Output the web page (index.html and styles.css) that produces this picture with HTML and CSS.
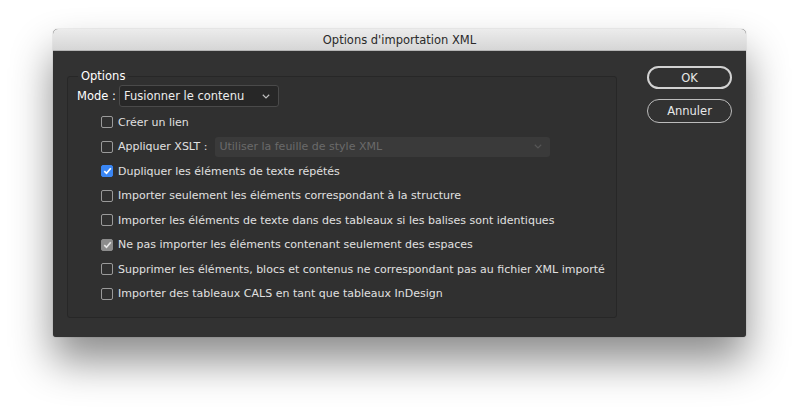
FILE: index.html
```html
<!DOCTYPE html>
<html lang="fr">
<head>
<meta charset="utf-8">
<title>Options d'importation XML</title>
<link rel="stylesheet" href="styles.css">
</head>
<body>
<div class="stage">
  <div class="window">
    <div class="titlebar">Options d'importation XML</div>
    <div class="content">
      <fieldset class="group">
        <legend class="legend">Options</legend>
        <div class="mode-row">
          <span class="mode-label">Mode :</span>
          <div class="select">
            <span>Fusionner le contenu</span>
            <svg class="chev" width="8" height="5" viewBox="0 0 8 5"><path d="M0.8 0.8 L4 3.9 L7.2 0.8" fill="none" stroke="#bdbdbd" stroke-width="1.2"/></svg>
          </div>
        </div>
        <ul class="checks">
          <li class="row"><span class="cb"></span><span>Créer un lien</span></li>
          <li class="row"><span class="cb"></span><span>Appliquer XSLT :</span>
            <div class="select select-disabled">
              <span>Utiliser la feuille de style XML</span>
              <svg class="chev" width="8" height="5" viewBox="0 0 8 5"><path d="M0.8 0.8 L4 3.9 L7.2 0.8" fill="none" stroke="#555" stroke-width="1.2"/></svg>
            </div>
          </li>
          <li class="row"><span class="cb cb-on"><svg width="9" height="8" viewBox="0 0 9 8"><path d="M1.3 4.2 L3.5 6.3 L7.8 1.3" fill="none" stroke="#fff" stroke-width="1.7"/></svg></span><span>Dupliquer les éléments de texte répétés</span></li>
          <li class="row"><span class="cb"></span><span>Importer seulement les éléments correspondant à la structure</span></li>
          <li class="row"><span class="cb"></span><span>Importer les éléments de texte dans des tableaux si les balises sont identiques</span></li>
          <li class="row"><span class="cb cb-dim"><svg width="9" height="8" viewBox="0 0 9 8"><path d="M1.3 4.2 L3.5 6.3 L7.8 1.3" fill="none" stroke="#e6e6e6" stroke-width="1.7"/></svg></span><span>Ne pas importer les éléments contenant seulement des espaces</span></li>
          <li class="row"><span class="cb"></span><span>Supprimer les éléments, blocs et contenus ne correspondant pas au fichier XML importé</span></li>
          <li class="row"><span class="cb"></span><span>Importer des tableaux CALS en tant que tableaux InDesign</span></li>
        </ul>
      </fieldset>
      <div class="buttons">
        <button class="btn btn-default">OK</button>
        <button class="btn">Annuler</button>
      </div>
    </div>
  </div>
</div>
</body>
</html>
```
FILE: styles.css
```css
html, body {
  margin: 0;
  padding: 0;
  background: #ffffff;
}
body {
  font-family: "DejaVu Sans", "Noto Sans", sans-serif;
  width: 799px;
  height: 412px;
  overflow: hidden;
}
.stage {
  padding: 29px 0 0 53px;
}
.window {
  width: 693px;
  border-radius: 5px 5px 3px 3px;
  overflow: hidden;
  background: #323232;
  box-shadow: 0 24px 42px rgba(0, 0, 0, 0.45), 0 0 1px rgba(0, 0, 0, 0.5);
}
.titlebar {
  height: 21px;
  line-height: 22px;
  text-align: center;
  font-size: 11.5px;
  color: #2a2a2a;
  background: linear-gradient(#ececec, #d6d6d6);
  border-bottom: 1px solid #b4b4b4;
}
.content {
  display: flex;
  gap: 30px;
  padding: 15px 14px 19px 14px;
}
.group {
  margin: 3px 0 0 0;
  padding: 0 0 11px 9px;
  width: 540px;
  min-width: 0;
  border: 1px solid #272727;
  border-radius: 3px;
  background: #303030;
}
.legend {
  margin-left: 1px;
  padding: 0 3px;
  font-size: 11.5px;
  line-height: 14px;
  color: #ffffff;
}
.mode-row {
  display: flex;
  align-items: center;
  height: 22px;
  margin-top: 2px;
  margin-bottom: 3px;
  font-size: 11.5px;
  color: #ffffff;
}
.mode-label {
  width: 42px;
  flex: 0 0 42px;
}
.select {
  display: flex;
  align-items: center;
  justify-content: space-between;
  box-sizing: border-box;
  width: 160px;
  height: 22px;
  padding: 0 8px 0 4px;
  background: #272727;
  border: 1px solid #4a4a4a;
  border-radius: 3px;
  color: #ececec;
  font-size: 11.5px;
}
.chev {
  flex: 0 0 auto;
}
.checks {
  list-style: none;
  margin: 0;
  padding: 0 0 0 24px;
}
.row {
  display: flex;
  align-items: center;
  height: 24.5px;
  font-size: 11px;
  color: #e0e0e0;
  white-space: nowrap;
}
.cb {
  box-sizing: border-box;
  flex: 0 0 12px;
  width: 12px;
  height: 12px;
  margin-right: 5px;
  border: 1px solid #9a9a9a;
  border-radius: 2px;
  display: flex;
  align-items: center;
  justify-content: center;
}
.cb-on {
  background: #3a86f4;
  border-color: #3a86f4;
}
.cb-dim {
  background: #8c8c8c;
  border-color: #8c8c8c;
}
.select-disabled {
  width: 335px;
  height: 20px;
  margin-left: 8px;
  background: #3a3a3a;
  border: none;
  color: #6a6a6a;
  font-size: 11px;
}
.buttons {
  display: flex;
  flex-direction: column;
  gap: 10px;
  width: 85px;
}
.btn {
  box-sizing: border-box;
  width: 85px;
  height: 24px;
  border-radius: 12px;
  border: 1px solid #bcbcbc;
  background: transparent;
  color: #e8e8e8;
  font-family: "DejaVu Sans", "Noto Sans", sans-serif;
  font-size: 11.5px;
  padding: 0;
}
.btn-default {
  height: 23px;
  border: 2px solid #d2d2d2;
}
```
